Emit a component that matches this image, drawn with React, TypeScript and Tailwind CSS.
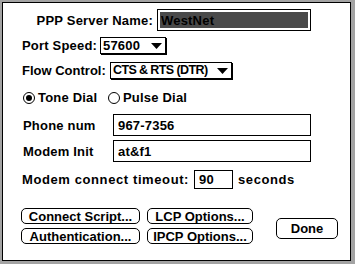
import React from "react";

const font = "font-['Liberation_Sans',Arial,sans-serif] font-bold text-[13px] tracking-[0.2px] text-black whitespace-nowrap";

const Popup = ({ label, width, tight }: { label: string; width: string; tight?: boolean }) => (
  <div className={`${width} h-[17px] border border-black bg-white shadow-[1px_1px_0_#000] flex items-center pl-[2px] pr-[3px]`}>
    <span className={`leading-none ${tight ? "tracking-[-0.6px] text-[12.5px]" : ""}`}>{label}</span>
    <svg className="ml-auto shrink-0" width="11" height="6" viewBox="0 0 11 6">
      <path d="M0 0H11L5.5 6Z" fill="#000" />
    </svg>
  </div>
);

const Radio = ({ checked, label }: { checked?: boolean; label: string }) => (
  <div className="flex items-center">
    <div className="w-[12px] h-[12px] rounded-full border border-black flex items-center justify-center">
      {checked && <div className="w-[6px] h-[6px] rounded-full bg-black" />}
    </div>
    <span className="ml-[3px] leading-none">{label}</span>
  </div>
);

const Button = ({ label, className }: { label: string; className: string }) => (
  <div className={`${className} border border-black rounded-[5px] flex items-center justify-center leading-none tracking-normal`}>
    {label}
  </div>
);

export default function App() {
  return (
    <div className="w-[355px] h-[264px] bg-[#a3a3a3] pt-[2px] pl-[2px]">
      <div className={`w-[349px] h-[259px] border border-black bg-white flex flex-col ${font}`}>
        {/* server name */}
        <div className="mt-[6px] h-[22px] flex items-center">
          <div className="w-[150px] text-right leading-none">PPP Server Name:</div>
          <div className="ml-[4px] w-[154px] h-[22px] border border-black p-[2px]">
            <div className="h-full bg-[#4a4a4a] flex items-center pl-[1px] leading-none">WestNet</div>
          </div>
        </div>

        <div className="mt-[6px] flex items-center pl-[19px]">
          <div className="w-[78px] leading-none">Port Speed:</div>
          <Popup label="57600" width="w-[66px]" />
        </div>

        <div className="mt-[8px] flex items-center pl-[19px]">
          <div className="w-[88px] leading-none tracking-normal">Flow Control:</div>
          <Popup label="CTS & RTS (DTR)" width="w-[122px]" tight />
        </div>

        <div className="mt-[12px] flex items-center pl-[20px]">
          <div className="w-[85px]">
            <Radio checked label="Tone Dial" />
          </div>
          <Radio label="Pulse Dial" />
        </div>

        <div className="mt-[10px] flex flex-col gap-[4px] pl-[20px]">
          <div className="flex items-center">
            <div className="w-[90px] leading-none">Phone num</div>
            <div className="w-[198px] h-[22px] border border-black flex items-center pl-[4px] leading-none">967-7356</div>
          </div>
          <div className="flex items-center">
            <div className="w-[90px] leading-none">Modem Init</div>
            <div className="w-[198px] h-[22px] border border-black flex items-center pl-[4px] leading-none">at&amp;f1</div>
          </div>
        </div>

        <div className="mt-[8px] flex items-center pl-[19px]">
          <div className="w-[172px] leading-none tracking-[0.6px]">Modem connect timeout:</div>
          <div className="w-[39px] h-[19px] border border-black flex items-center pl-[4px] leading-none">90</div>
          <div className="ml-[5px] leading-none tracking-[0.6px]">seconds</div>
        </div>

        <div className="mt-[19px] flex pl-[18px]">
          <div className="grid grid-cols-[119px_106px] gap-x-[7px] gap-y-[4px]">
            <Button label="Connect Script..." className="h-[16px]" />
            <Button label="LCP Options..." className="h-[16px]" />
            <Button label="Authentication..." className="h-[16px]" />
            <Button label="IPCP Options..." className="h-[16px]" />
          </div>
          <Button label="Done" className="ml-[23px] mt-[10px] w-[62px] h-[21px]" />
        </div>
      </div>
    </div>
  );
}
